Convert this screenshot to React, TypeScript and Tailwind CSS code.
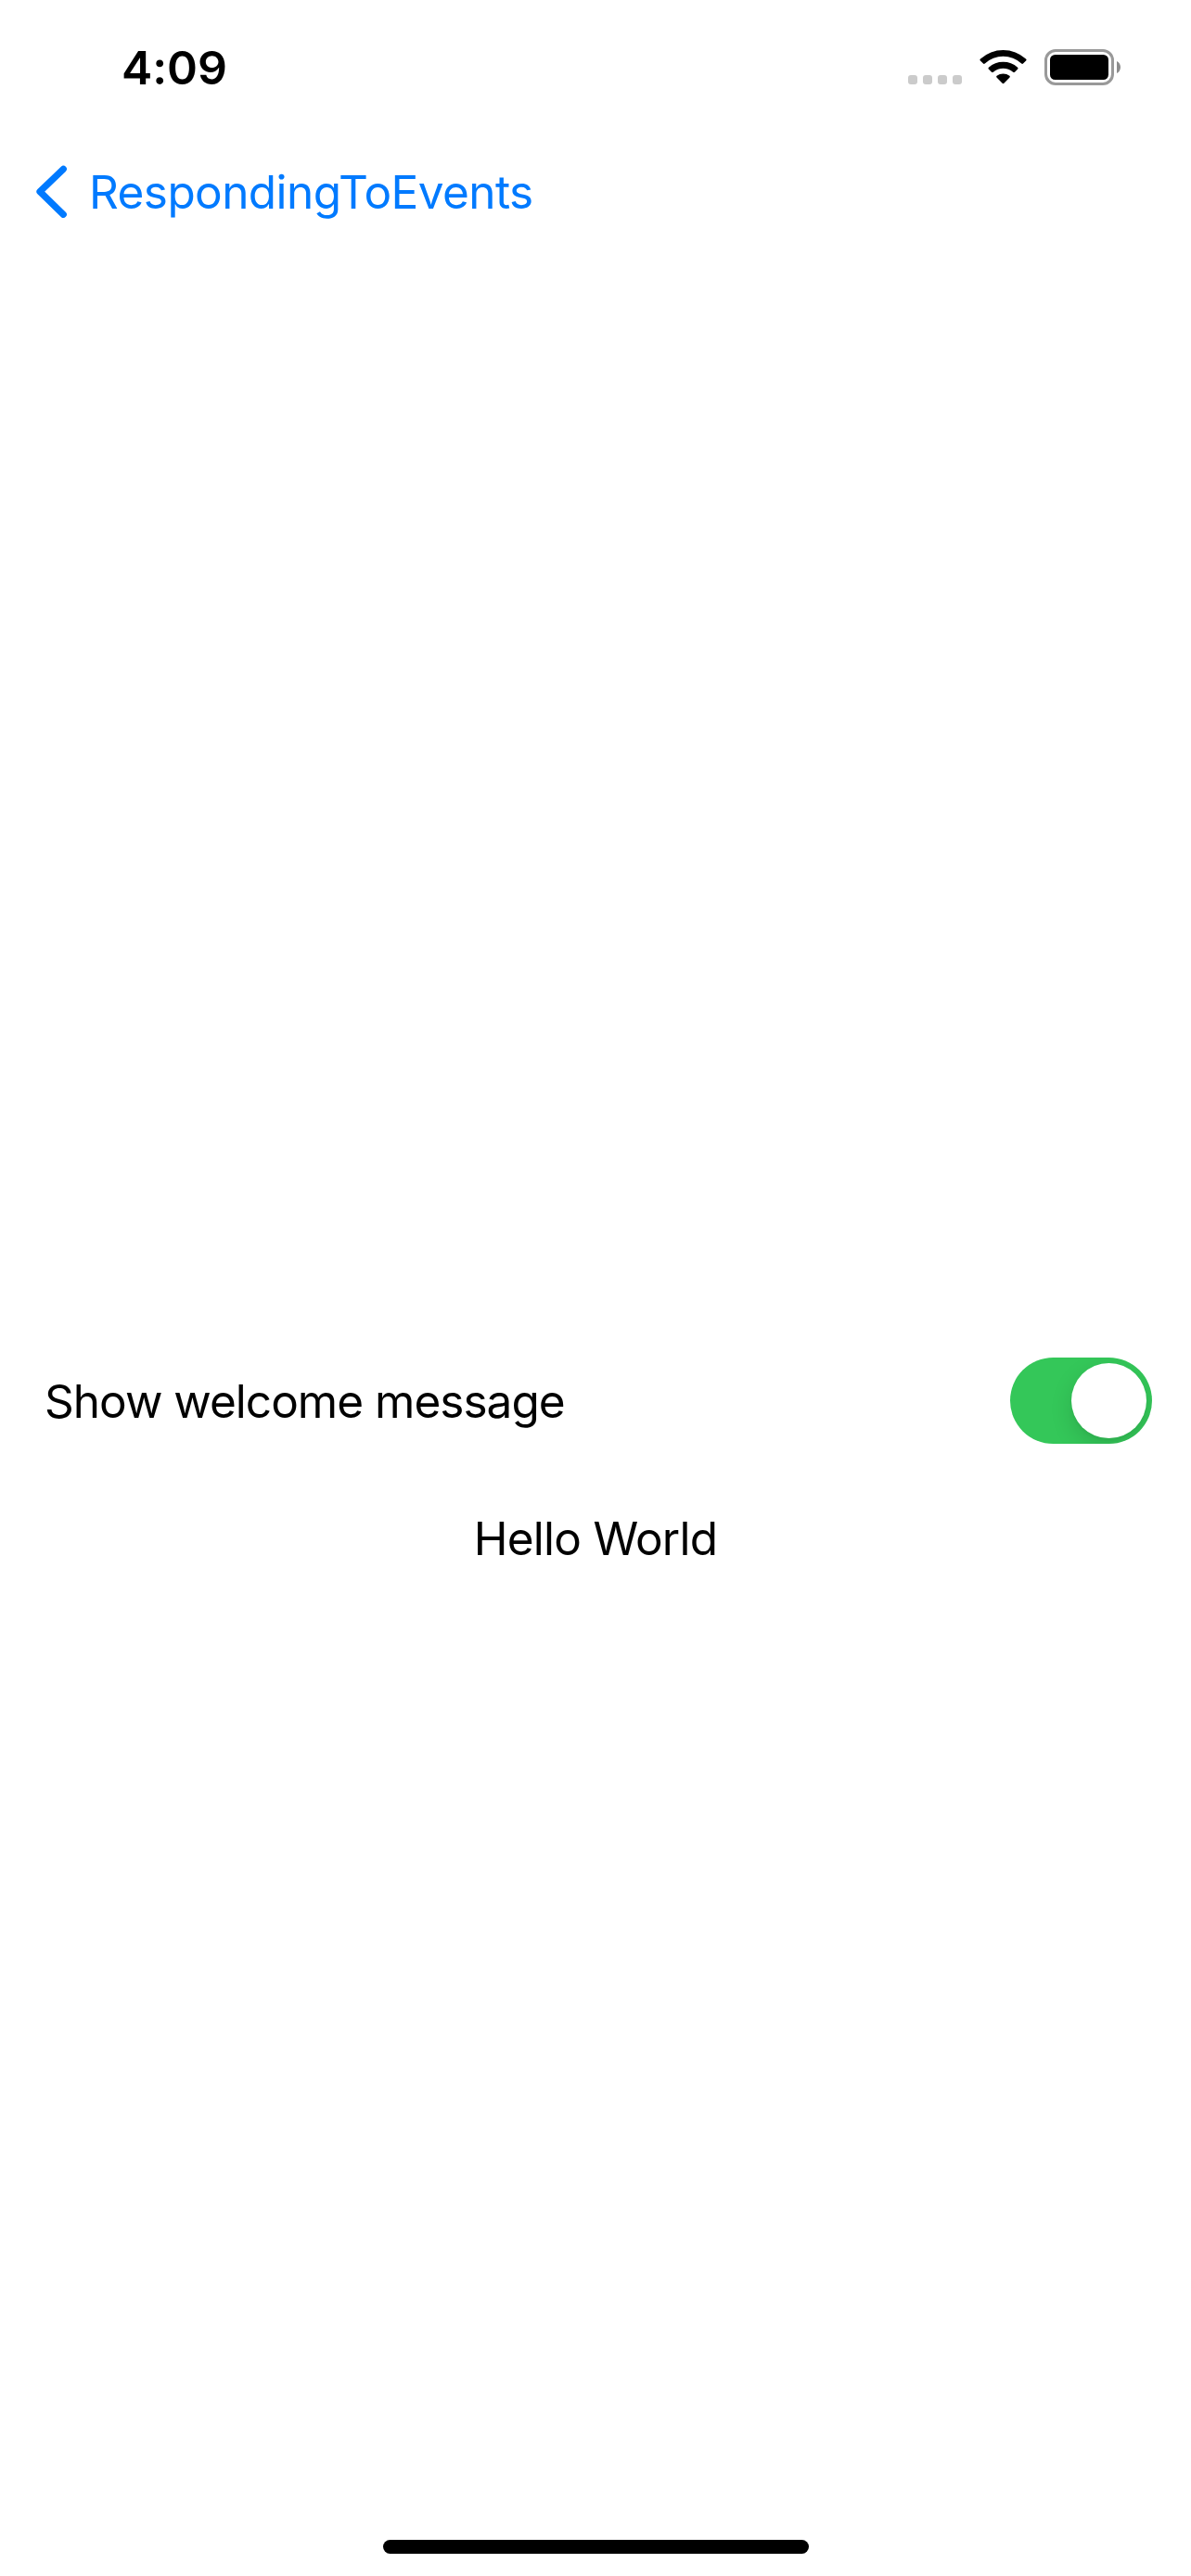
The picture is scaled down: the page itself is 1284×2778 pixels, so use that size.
import { useState } from "react";

function CellularDots() {
  return (
    <div className="flex gap-[6px] pb-px">
      {[0, 1, 2, 3].map((dot) => (
        <span key={dot} className="size-[10px] rounded-[3px] bg-[#cbcbcb]" />
      ))}
    </div>
  );
}

function WifiIcon() {
  return (
    <svg className="h-[38px] w-[51px]" viewBox="0 0 51 38" fill="none" aria-hidden="true">
      <path
        d="M1 10.4A36.6 36.6 0 0 1 50 10.4Q51.1 11.4 50.1 12.4L47 15.5Q46.2 16.3 45.2 15.4A29.4 29.4 0 0 0 5.8 15.4Q4.8 16.3 4 15.5L.9 12.4Q-.1 11.4 1 10.4Z"
        fill="black"
      />
      <path
        d="M9.9 19.7A23.6 23.6 0 0 1 41.1 19.7Q42.1 20.6 41.2 21.5L38 24.7Q37.1 25.5 36.2 24.7A16.6 16.6 0 0 0 14.8 24.7Q13.9 25.5 13 24.7L9.8 21.5Q8.9 20.6 9.9 19.7Z"
        fill="black"
      />
      <path
        d="M18.6 28.8A11.4 11.4 0 0 1 32.4 28.8Q33.4 29.7 32.5 30.6L26.4 36.8Q25.5 37.7 24.6 36.8L18.5 30.6Q17.6 29.7 18.6 28.8Z"
        fill="black"
      />
    </svg>
  );
}

function BatteryIcon() {
  return (
    <div className="flex items-center gap-[3px]">
      <div className="h-[39px] w-[75px] rounded-[12px] border-3 border-[#999999] p-[3px]">
        <div className="h-full rounded-[5.5px] bg-black" />
      </div>
      <svg className="h-[13px] w-[4px]" viewBox="0 0 4 13" aria-hidden="true">
        <path d="M0 0C2.4 1 4 3.6 4 6.5S2.4 12 0 13Z" fill="#8c8c8c" />
      </svg>
    </div>
  );
}

function StatusBar() {
  return (
    <header className="flex h-[146px] items-start justify-between pr-[76px] pl-[131px]">
      <time className="mt-[43px] text-[50px] leading-[60px] font-semibold tracking-[-0.1px]">
        4:09
      </time>
      <div className="mt-[53px] flex h-[39px] items-end">
        <CellularDots />
        <div className="ml-[19px] flex h-full items-start">
          <WifiIcon />
        </div>
        <div className="ml-[19px]">
          <BatteryIcon />
        </div>
      </div>
    </header>
  );
}

function NavigationBar() {
  return (
    <nav className="flex h-[132px] items-start pl-[38px] text-[#007aff]">
      <button className="mt-[31px] flex items-start">
        <svg className="mt-px h-[58px] w-[35px]" viewBox="0 0 35 58" fill="none" aria-hidden="true">
          <path
            d="M30.3 4.3 5 28.7 30.3 53.3"
            stroke="currentColor"
            strokeWidth="7.2"
            strokeLinecap="round"
            strokeLinejoin="round"
          />
        </svg>
        <span className="ml-[23px] text-[49.5px] leading-[60px] tracking-[-0.58px]">
          RespondingToEvents
        </span>
      </button>
    </nav>
  );
}

function Toggle({ on, onChange }: { on: boolean; onChange: (on: boolean) => void }) {
  return (
    <button
      role="switch"
      aria-checked={on}
      aria-label="Show welcome message"
      onClick={() => onChange(!on)}
      className={`flex h-[93px] w-[153px] items-center overflow-hidden rounded-full px-[6px] ${
        on ? "justify-end bg-[#34c759]" : "justify-start bg-[#e9e9eb]"
      }`}
    >
      <span className="size-[81px] rounded-full bg-white shadow-[0_9px_24px_rgba(0,0,0,0.13),0_3px_3px_rgba(0,0,0,0.03)]" />
    </button>
  );
}

export default function App() {
  const [showMessage, setShowMessage] = useState(true);

  return (
    <div className="flex h-[2778px] w-[1284px] flex-col bg-white font-['Inter',sans-serif] text-black">
      <StatusBar />
      <NavigationBar />
      <main className="flex grow flex-col pt-[1186px]">
        <div className="flex h-[93px] items-center justify-between pr-[42px] pl-[48px]">
          <span className="text-[49.5px] leading-[60px] tracking-[-0.98px]">
            Show welcome message
          </span>
          <Toggle on={showMessage} onChange={setShowMessage} />
        </div>
        {showMessage && (
          <p className="mt-[72px] text-center text-[49.5px] leading-[60px] tracking-[-0.74px]">
            Hello World
          </p>
        )}
      </main>
      <footer className="flex h-[39px] justify-center">
        <div className="h-[15px] w-[459px] rounded-full bg-black" />
      </footer>
    </div>
  );
}
